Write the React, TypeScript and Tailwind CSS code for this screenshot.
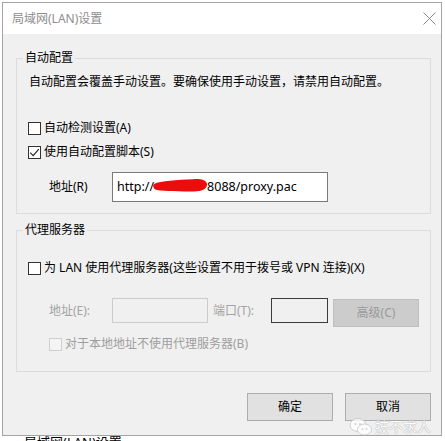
import React from "react";

function Box({ checked = false, disabled = false }: { checked?: boolean; disabled?: boolean }) {
  return (
    <span
      className={
        disabled
          ? "flex h-[13px] w-[13px] shrink-0 items-center justify-center border border-[#cfcfcf] bg-[#f4f4f4]"
          : "flex h-[13px] w-[13px] shrink-0 items-center justify-center border border-[#333333] bg-white"
      }
    >
      {checked && (
        <svg width="11" height="11" viewBox="0 0 11 11">
          <path d="M1.2 5.6 L4.2 8.6 L9.8 2.2" stroke="#222" strokeWidth="1.1" fill="none" />
        </svg>
      )}
    </span>
  );
}

function Check({ label, checked, disabled, indent }: { label: string; checked?: boolean; disabled?: boolean; indent: string }) {
  return (
    <div className={`flex h-[16px] items-center gap-[3px] ${indent}`}>
      <Box checked={checked} disabled={disabled} />
      <span className={disabled ? "text-[#9e9e9e]" : "text-black"}>{label}</span>
    </div>
  );
}

export default function App() {
  return (
    <div className="h-[441px] w-[445px] overflow-hidden bg-white text-[12px] leading-[16px] [font-family:'Noto_Sans','Noto_Sans_CJK_SC',sans-serif]">
      <div className="ml-[2px] mt-[2px] flex h-[434px] w-[440px] flex-col border border-[#a3a3a3]">
        {/* title bar */}
        <div className="flex h-[31px] shrink-0 items-center justify-between bg-white pl-[9px] pr-[4px]">
          <span className="text-[12px] text-[#8e8e8e]">局域网(LAN)设置</span>
          <svg width="13" height="13" viewBox="0 0 13 13" className="mb-[1px] mr-[1px]">
            <path d="M0.5 0.5 L12.5 12.5 M12.5 0.5 L0.5 12.5" stroke="#8a8a8a" strokeWidth="1" />
          </svg>
        </div>

        {/* dialog body */}
        <div className="relative flex flex-1 flex-col bg-[#f0f0f0] pl-[13px] pt-[16px]">
          <fieldset className="h-[164px] w-[415px] border border-[#dcdcdc]">
            <legend className="ml-[6px] px-[2px] leading-[16px] text-black">自动配置</legend>
            <div className="mt-[8px] h-[16px] pl-[12px] text-black">
              自动配置会覆盖手动设置。要确保使用手动设置，请禁用自动配置。
            </div>
            <div className="mt-[30px]">
              <Check label="自动检测设置(A)" indent="pl-[11px]" />
            </div>
            <div className="mt-[8px]">
              <Check label="使用自动配置脚本(S)" checked indent="pl-[11px]" />
            </div>
            <div className="mt-[12px] flex h-[30px] items-center">
              <span className="w-[95px] pl-[32px] text-black">地址(R)</span>
              <div className="relative flex h-[30px] w-[216px] items-center border border-[#7a7a7a] bg-white pl-[4px] text-[12.5px] text-black">
                <span>http://</span>
                <span className="w-[53px]" />
                <span>8088/proxy.pac</span>
                <svg className="absolute left-[40px] top-[4px]" width="55" height="16" viewBox="0 0 55 16">
                  <path
                    d="M1 7 C8 3.5 24 3 40 2.2 C47 1.8 53 2.5 54 7 C54.5 12 49 14.5 41 14.5 C28 14.5 12 14.2 4 13 C0 12.4 -0.5 8.2 1 7 Z"
                    fill="#ec0c0c"
                  />
                </svg>
              </div>
            </div>
          </fieldset>

          <fieldset className="mt-[8px] h-[150px] w-[415px] border border-[#dcdcdc]">
            <legend className="ml-[6px] px-[2px] leading-[16px] text-black">代理服务器</legend>
            <div className="mt-[22px]">
              <Check label="为 LAN 使用代理服务器(这些设置不用于拨号或 VPN 连接)(X)" indent="pl-[11px]" />
            </div>
            <div className="mt-[22px] flex h-[29px] items-start">
              <span className="mt-[5px] w-[95px] pl-[32px] text-[#a3a3a3]">地址(E):</span>
              <div className="h-[25px] w-[96px] border border-[#cccccc] bg-[#f0f0f0]" />
              <span className="mt-[5px] w-[63px] pl-[5px] text-[#a3a3a3]">端口(T):</span>
              <div className="h-[25px] w-[57px] border border-[#3c3c3c] bg-[#f0f0f0]" />
              <div className="ml-[5px] mt-[1px] flex h-[28px] w-[86px] items-center justify-center border border-[#bfbfbf] bg-[#cccccc] text-[#9a9a9a]">
                高级(C)
              </div>
            </div>
            <div className="mt-[9px]">
              <Check label="对于本地地址不使用代理服务器(B)" disabled indent="pl-[32px]" />
            </div>
          </fieldset>

          <div className="mt-[21px] flex w-[415px] justify-end gap-[12px]">
            <div className="flex h-[28px] w-[86px] items-center justify-center border border-[#adadad] bg-[#e1e1e1] text-black">
              确定
            </div>
            <div className="flex h-[28px] w-[86px] items-center justify-center border border-[#adadad] bg-[#e1e1e1] text-black">
              取消
            </div>
          </div>

          {/* account badge laid over the corner */}
          <div className="absolute left-[346px] top-[383px] flex items-center gap-[2px] opacity-80">
            <svg width="24" height="20" viewBox="0 0 24 20">
              <ellipse cx="9" cy="8" rx="8" ry="6.5" fill="#ffffff" stroke="#c8c8c8" strokeWidth="1" />
              <ellipse cx="15.5" cy="12.5" rx="7" ry="5.5" fill="#ffffff" stroke="#c8c8c8" strokeWidth="1" />
              <circle cx="6.5" cy="7" r="1" fill="#c8c8c8" />
              <circle cx="11" cy="7" r="1" fill="#c8c8c8" />
              <circle cx="13.5" cy="12" r="0.9" fill="#c8c8c8" />
              <circle cx="17.5" cy="12" r="0.9" fill="#c8c8c8" />
            </svg>
            <span className="text-[14px] text-white [text-shadow:0_0_1px_#9a9a9a,0_0_1px_#9a9a9a]">技不求人</span>
          </div>
        </div>
      </div>
      <div className="h-[5px] overflow-hidden bg-white pl-[24px]">
        <div className="-mt-[2px] text-[13px] leading-[16px] text-black">局域网(LAN)设置</div>
      </div>
    </div>
  );
}
